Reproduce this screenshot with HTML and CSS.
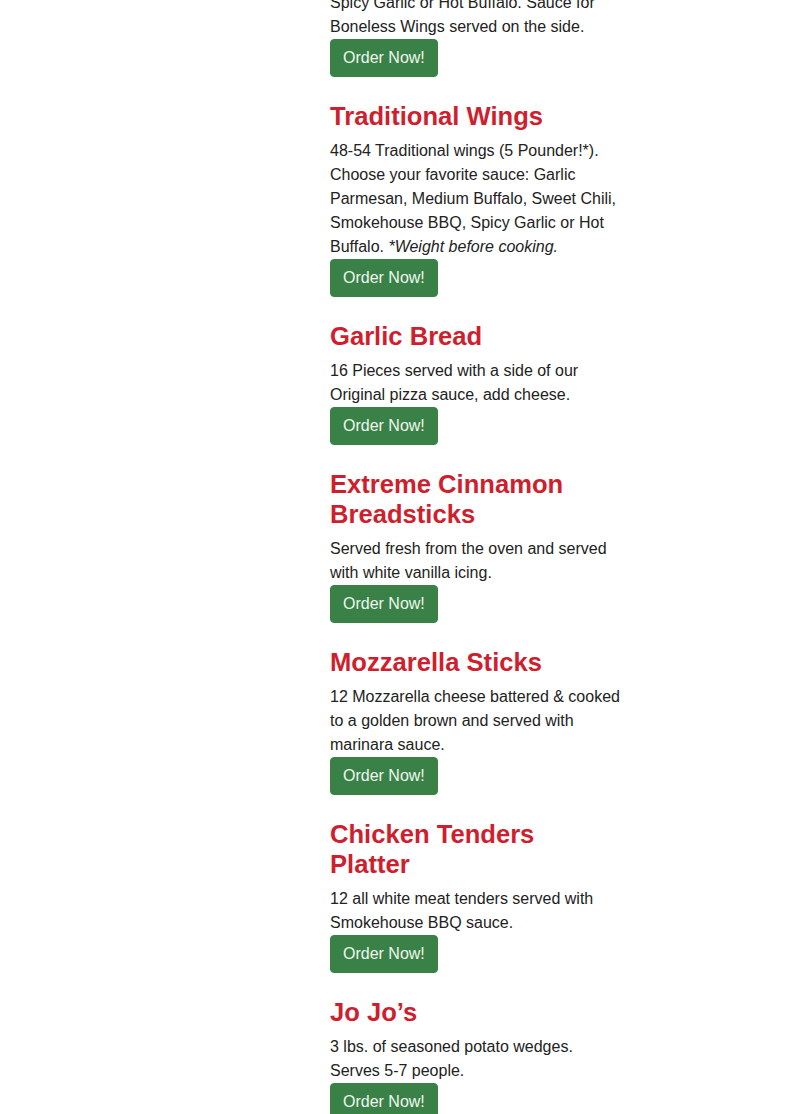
FILE: index.html
```html
<!DOCTYPE html>
<html>
<head>
<meta name="viewport" content="width=device-width, initial-scale=1">
<link rel="stylesheet" href="styles.css">
</head>
<body>

<div class="menu-row">
  <div class="menu-photo"></div>
  <div class="menu-list">

    <div class="menu-item first">
      <p>Spicy Garlic or Hot Buffalo. Sauce for Boneless Wings served on the side.</p>
      <a class="btn-order" href="#">Order Now!</a>
    </div>

    <div class="menu-item">
      <h3>Traditional Wings</h3>
      <p>48-54 Traditional wings (5 Pounder!*). Choose your favorite sauce: Garlic Parmesan, Medium Buffalo, Sweet Chili, Smokehouse BBQ, Spicy Garlic or Hot Buffalo. <em>*Weight before cooking.</em></p>
      <a class="btn-order" href="#">Order Now!</a>
    </div>

    <div class="menu-item">
      <h3>Garlic Bread</h3>
      <p>16 Pieces served with a side of our Original pizza sauce, add cheese.</p>
      <a class="btn-order" href="#">Order Now!</a>
    </div>

    <div class="menu-item">
      <h3>Extreme Cinnamon Breadsticks</h3>
      <p>Served fresh from the oven and served with white vanilla icing.</p>
      <a class="btn-order" href="#">Order Now!</a>
    </div>

    <div class="menu-item">
      <h3>Mozzarella Sticks</h3>
      <p>12 Mozzarella cheese battered &amp; cooked to a golden brown and served with marinara sauce.</p>
      <a class="btn-order" href="#">Order Now!</a>
    </div>

    <div class="menu-item">
      <h3>Chicken Tenders Platter</h3>
      <p>12 all white meat tenders served with Smokehouse BBQ sauce.</p>
      <a class="btn-order" href="#">Order Now!</a>
    </div>

    <div class="menu-item">
      <h3>Jo Jo’s</h3>
      <p>3 lbs. of seasoned potato wedges. Serves 5-7 people.</p>
      <a class="btn-order" href="#">Order Now!</a>
    </div>

  </div>
</div>

</body>
</html>
```

FILE: styles.css
```css
body {
  font-family: "Liberation Sans", Arial, sans-serif;
  font-size: 16px;
  line-height: 24px;
  color: #222;
  background-color: #fff;
  margin: 0;
  overflow: hidden;
}

.menu-row {
  display: grid;
  grid-template-columns: 330px 290px;
}

.menu-list {
  margin-top: -9px;
}

.menu-item {
  margin-bottom: 24px;
}

.menu-item h3 {
  font-size: 25.6px;
  line-height: 30px;
  font-weight: bold;
  color: #cf1f2e;
  margin: 0 0 8px;
}

.menu-item p {
  margin: 0;
}

.btn-order {
  display: inline-block;
  padding: 6px 12px;
  border: 1px solid #3a8148;
  border-radius: 4px;
  background-color: #3a8148;
  color: #eef8ee;
  text-decoration: none;
  font-size: 16px;
  line-height: 24px;
  vertical-align: top;
}
```
